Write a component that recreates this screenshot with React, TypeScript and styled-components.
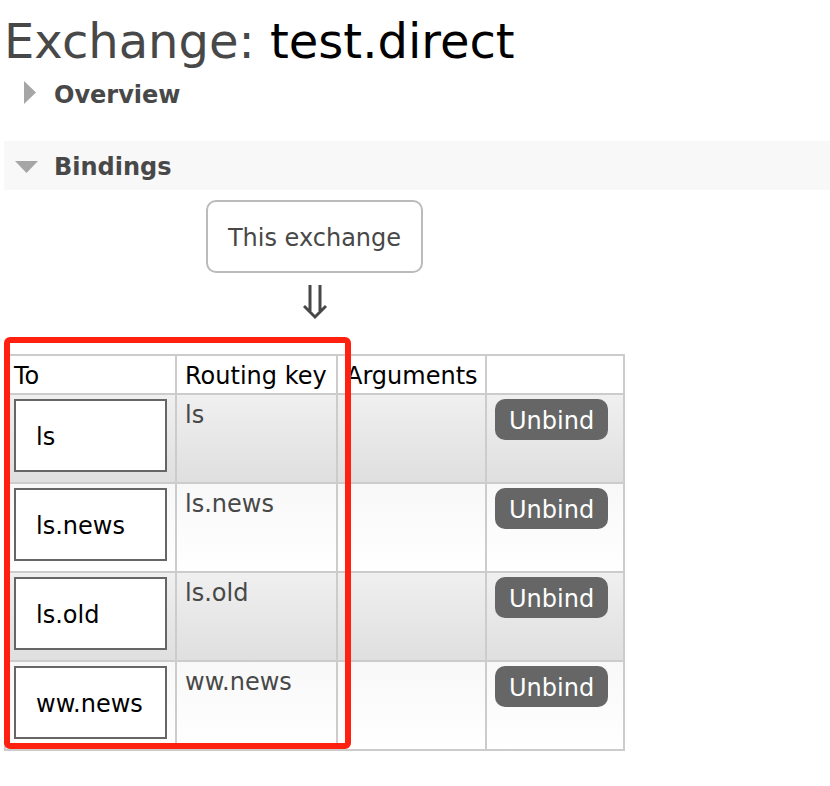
import React, { useState } from "react";
import styled, { createGlobalStyle } from "styled-components";

const GlobalStyle = createGlobalStyle`
  *, *::before, *::after { box-sizing: border-box; }
  body {
    margin: 0;
    background: #fff;
    color: #484848;
    font-family: Verdana, "DejaVu Sans", sans-serif;
    font-size: 24px;
    line-height: 32px;
  }
`;

const Page = styled.main`
  padding: 13px 0 32px 4px;
`;

const Title = styled.h1`
  margin: 0;
  font-size: 48px;
  line-height: 56px;
  font-weight: 400;
`;

const ExchangeName = styled.b`
  color: #000;
  font-weight: 400;
`;

const Section = styled.section`
  margin-bottom: 23px;
`;

const SectionHeading = styled.h2`
  margin: 0;
  font-size: 24px;
  line-height: 32px;
`;

const SectionToggle = styled.button<{ $open: boolean }>`
  display: flex;
  align-items: center;
  gap: 16px;
  width: 100%;
  height: 49px;
  padding: 2px 10px 0;
  border: 0;
  background: ${({ $open }) => ($open ? "#f8f8f8" : "transparent")};
  color: inherit;
  font: inherit;
  font-weight: 700;
  text-align: left;
  cursor: pointer;
`;

const Marker = styled.svg`
  flex: none;
  width: 24px;
  height: 24px;
  fill: #a6a6a6;
  overflow: visible;
`;

const Bindings = styled.div`
  display: flex;
  flex-direction: column;
  align-items: center;
  width: fit-content;
  padding-top: 10px;
`;

const ExchangeBox = styled.div`
  padding: 20px 20px 17px;
  border: 2px solid #bbb;
  border-radius: 10px;
`;

const Arrow = styled.svg`
  width: 24px;
  height: 36px;
  margin: 11px 0 34px;
  fill: none;
  stroke: #484848;
  stroke-width: 3;
`;

const TableFrame = styled.div`
  position: relative;
`;

const Highlight = styled.div`
  position: absolute;
  inset: -17px auto 2px 0;
  width: 347px;
  border: 6px solid #ff2010;
  border-radius: 6px;
  pointer-events: none;
`;

const Table = styled.table`
  border-collapse: collapse;
  table-layout: fixed;
  width: 621px;
`;

const Column = styled.col<{ $width: number }>`
  width: ${({ $width }) => $width}px;
`;

const HeaderCell = styled.th`
  height: 39px;
  padding: 4px 8px 1px;
  border: 2px solid #ccc;
  color: #000;
  font-weight: 400;
  text-align: left;
  white-space: nowrap;
`;

const Row = styled.tr`
  background: linear-gradient(#f8f8f8, #fff);
  &:nth-child(odd) { background: linear-gradient(#f0f0f0, #dfdfdf); }
`;

const Cell = styled.td`
  height: 89px;
  padding: 4px 8px 10px;
  border: 2px solid #ccc;
  vertical-align: top;
`;

const QueueLink = styled.a`
  display: block;
  padding: 20px 20px 17px;
  border: 2px solid #666;
  background: #fff;
  color: #000;
  text-decoration: none;
`;

const UnbindButton = styled.button`
  display: block;
  height: 41px;
  padding: 2px 14px 0;
  border: 0;
  border-radius: 10px;
  background: #666;
  color: #fff;
  font: inherit;
  cursor: pointer;
`;

const queues = ["ls", "ls.news", "ls.old", "ww.news"];
const columnWidths = [171, 161, 149, 138];

function CollapsibleSection({ title, initiallyOpen = false, children }: {
  title: string;
  initiallyOpen?: boolean;
  children?: React.ReactNode;
}) {
  const [open, setOpen] = useState(initiallyOpen);
  return (
    <Section>
      <SectionHeading>
        <SectionToggle type="button" $open={open} aria-expanded={open} onClick={() => setOpen(!open)}>
          <Marker viewBox="0 0 24 24" aria-hidden="true">
            <path d={open ? "M1 6H24L12.500 18Z" : "M10 -2V21L22 9.500Z"} />
          </Marker>
          {title}
        </SectionToggle>
      </SectionHeading>
      {open && children}
    </Section>
  );
}

export default function App() {
  return (
    <>
      <GlobalStyle />
      <Page>
        <Title>Exchange: <ExchangeName>test.direct</ExchangeName></Title>
        <CollapsibleSection title="Overview" />
        <CollapsibleSection title="Bindings" initiallyOpen>
          <Bindings>
            <ExchangeBox>This exchange</ExchangeBox>
            <Arrow viewBox="0 0 24 36" aria-hidden="true">
              <path d="M7 1V27M17 1V27M1 22L12 33L23 22" />
            </Arrow>
            <TableFrame>
              <Table>
                <colgroup>
                  {columnWidths.map((width) => <Column key={width} $width={width} />)}
                </colgroup>
                <thead>
                  <tr>
                    <HeaderCell scope="col">To</HeaderCell>
                    <HeaderCell scope="col">Routing key</HeaderCell>
                    <HeaderCell scope="col">Arguments</HeaderCell>
                    <HeaderCell />
                  </tr>
                </thead>
                <tbody>
                  {queues.map((queue) => (
                    <Row key={queue}>
                      <Cell><QueueLink href={`#/queues/${queue}`}>{queue}</QueueLink></Cell>
                      <Cell>{queue}</Cell>
                      <Cell />
                      <Cell><UnbindButton type="button">Unbind</UnbindButton></Cell>
                    </Row>
                  ))}
                </tbody>
              </Table>
              <Highlight />
            </TableFrame>
          </Bindings>
        </CollapsibleSection>
      </Page>
    </>
  );
}
